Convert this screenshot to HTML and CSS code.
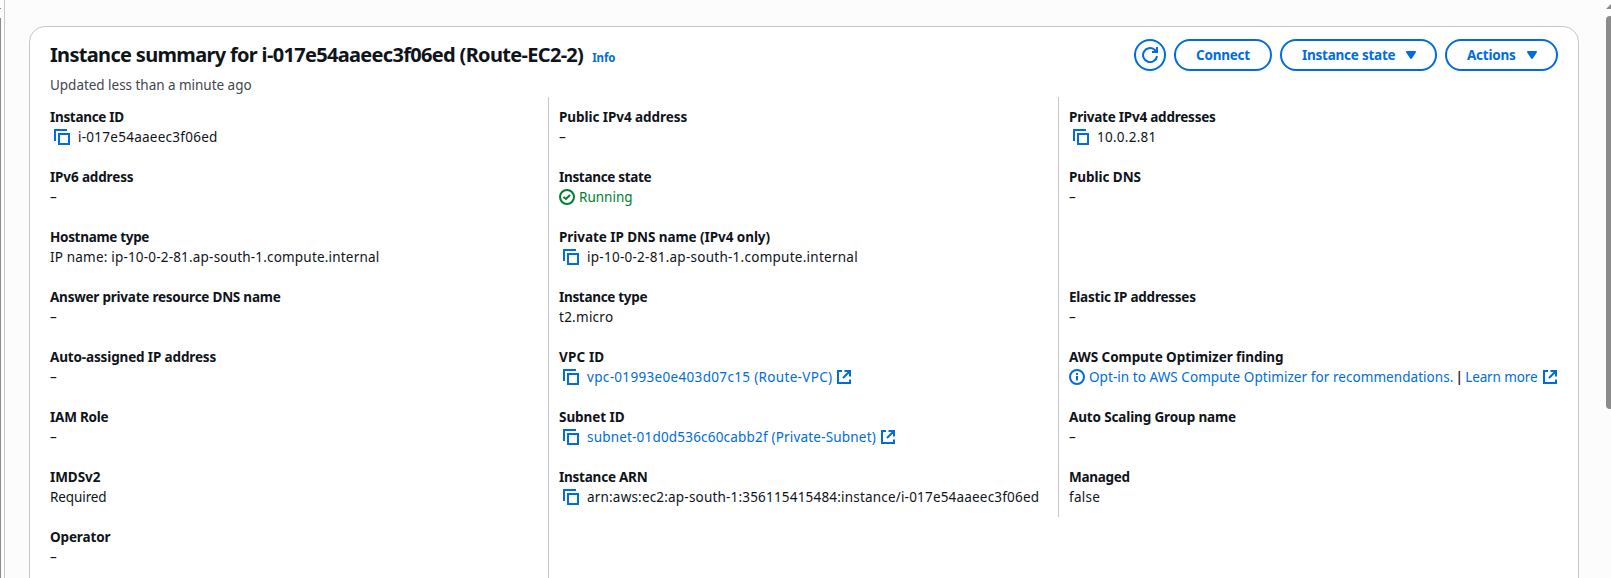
FILE: index.html
```html
<!DOCTYPE html>
<html lang="en">
<head>
<meta charset="utf-8">
<title>Instance summary</title>
<link rel="stylesheet" href="styles.css">
</head>
<body>
<svg class="defs" aria-hidden="true">
  <symbol id="copy" viewBox="0 0 16 16"><path d="M1 12V1h12M5 5h10v10H5z" fill="none" stroke="currentColor" stroke-width="2"/></symbol>
  <symbol id="external" viewBox="0 0 16 16"><path d="M6 2H2v12h12V10.500M8.500 2H14v5.500M14 2 7 9" fill="none" stroke="currentColor" stroke-width="2"/></symbol>
  <symbol id="check" viewBox="0 0 16 16"><circle cx="8" cy="8" r="7" fill="none" stroke="currentColor" stroke-width="2"/><path d="m4.500 8 2.500 2 4-4" fill="none" stroke="currentColor" stroke-width="2"/></symbol>
  <symbol id="info" viewBox="0 0 16 16"><circle cx="8" cy="8" r="7" fill="none" stroke="currentColor" stroke-width="2"/><path d="M8 11.500V7M8 6V4" fill="none" stroke="currentColor" stroke-width="2"/></symbol>
  <symbol id="refresh" viewBox="0 0 16 16"><path d="M15 9a7 7 0 1 1-2.500-6.300L15 5M15 0v5h-5" fill="none" stroke="currentColor" stroke-width="2"/></symbol>
  <symbol id="caret" viewBox="0 0 16 16"><path d="M4 5h8l-4 6z" fill="currentColor" stroke="currentColor" stroke-width="2" stroke-linejoin="round"/></symbol>
</svg>
<div class="page">
  <div class="rail"></div>
  <main class="content">
    <section class="card">
      <header class="header">
        <div class="heading">
          <h1>Instance summary for i-017e54aaeec3f06ed (Route-EC2-2)</h1>
          <a class="info">Info</a>
        </div>
        <div class="actions">
          <button class="btn round"><svg class="icon"><use href="#refresh"/></svg></button>
          <button class="btn connect">Connect</button>
          <button class="btn menu state">Instance state<svg class="icon"><use href="#caret"/></svg></button>
          <button class="btn menu more">Actions<svg class="icon"><use href="#caret"/></svg></button>
        </div>
      </header>
      <p class="updated">Updated less than a minute ago</p>
      <div class="columns">
        <dl class="column">
          <div class="field"><dt class="tight">Instance ID</dt><dd><svg class="icon copy"><use href="#copy"/></svg><span>i-017e54aaeec3f06ed</span></dd></div>
          <div class="field"><dt>IPv6 address</dt><dd>–</dd></div>
          <div class="field"><dt class="tight">Hostname type</dt><dd class="snug">IP name: ip-10-0-2-81.ap-south-1.compute.internal</dd></div>
          <div class="field"><dt class="mid">Answer private resource DNS name</dt><dd>–</dd></div>
          <div class="field"><dt>Auto-assigned IP address</dt><dd>–</dd></div>
          <div class="field"><dt class="mid">IAM Role</dt><dd>–</dd></div>
          <div class="field"><dt class="loose">IMDSv2</dt><dd class="narrow">Required</dd></div>
          <div class="field"><dt>Operator</dt><dd>–</dd></div>
        </dl>
        <dl class="column second">
          <div class="field"><dt class="loose">Public IPv4 address</dt><dd>–</dd></div>
          <div class="field"><dt class="tight">Instance state</dt><dd class="ok"><svg class="icon"><use href="#check"/></svg><span>Running</span></dd></div>
          <div class="field"><dt class="loose">Private IP DNS name (IPv4 only)</dt><dd><svg class="icon copy"><use href="#copy"/></svg><span>ip-10-0-2-81.ap-south-1.compute.internal</span></dd></div>
          <div class="field"><dt class="tight">Instance type</dt><dd>t2.micro</dd></div>
          <div class="field"><dt class="wide">VPC ID</dt><dd><svg class="icon copy"><use href="#copy"/></svg><a class="airy">vpc-01993e0e403d07c15 (Route-VPC)</a><svg class="icon ext"><use href="#external"/></svg></dd></div>
          <div class="field"><dt class="loose">Subnet ID</dt><dd><svg class="icon copy"><use href="#copy"/></svg><a class="snug">subnet-01d0d536c60cabb2f (Private-Subnet)</a><svg class="icon ext"><use href="#external"/></svg></dd></div>
          <div class="field"><dt class="mid">Instance ARN</dt><dd><svg class="icon copy"><use href="#copy"/></svg><span class="snug">arn:aws:ec2:ap-south-1:356115415484:instance/i-017e54aaeec3f06ed</span></dd></div>
        </dl>
        <dl class="column third">
          <div class="field"><dt class="mid">Private IPv4 addresses</dt><dd><svg class="icon copy"><use href="#copy"/></svg><span>10.0.2.81</span></dd></div>
          <div class="field tall"><dt class="loose">Public DNS</dt><dd>–</dd></div>
          <div class="field"><dt class="mid">Elastic IP addresses</dt><dd>–</dd></div>
          <div class="field"><dt class="loose">AWS Compute Optimizer finding</dt><dd class="finding"><svg class="icon"><use href="#info"/></svg><a class="optin">Opt-in to AWS Compute Optimizer for recommendations.</a><span class="bar">|</span><a class="narrow">Learn more</a><svg class="icon ext"><use href="#external"/></svg></dd></div>
          <div class="field"><dt>Auto Scaling Group name</dt><dd>–</dd></div>
          <div class="field"><dt class="tight">Managed</dt><dd>false</dd></div>
        </dl>
      </div>
    </section>
  </main>
  <div class="scroll"><svg class="up" viewBox="0 0 5 5"><path d="M0 5 5 0v5z" fill="#8b8b8b"/></svg><div class="thumb"></div></div>
</div>
</body>
</html>
```
FILE: styles.css
```css
* { box-sizing: border-box; }
body { margin: 0; font: 13.5px/20px "Noto Sans", "Open Sans", sans-serif; color: #0f141a; background: #fcfcfd; }
.defs { display: none; }
.page { display: flex; height: 578px; overflow: hidden; }
.rail { flex: none; width: 5px; background: linear-gradient(#8b8b8b, #8b8b8b) 0 18px / 1px 100% no-repeat, linear-gradient(#8b8b8b, #8b8b8b) 0 8px / 1px 1px no-repeat; border-right: 1px solid #c6c6cd; }
.content { flex: 1; min-width: 0; padding: 26px 27px 0 24px; }
.card { height: 600px; border: 1px solid #c6c6cd; border-radius: 16px; background: #fff; padding: 12px 20px 0; }
.header { display: flex; justify-content: space-between; height: 32px; }
.heading { display: flex; align-items: baseline; gap: 9px; white-space: nowrap; }
h1 { margin: 0; font-size: 20px; line-height: 32px; font-weight: 700; letter-spacing: -0.68px; }
.info { font-size: 11.5px; font-weight: 700; color: #006ce0; letter-spacing: -0.15px; }
.actions { display: flex; gap: 8px; }
.btn { display: flex; align-items: center; justify-content: center; height: 32px; padding: 0; border: 2px solid #006ce0; border-radius: 20px; background: #fff; color: #006ce0; font: 700 13.5px/20px "Noto Sans", sans-serif; letter-spacing: -0.24px; white-space: nowrap; }
.menu { justify-content: space-between; padding: 0 16px 0 20px; }
.round { width: 32px; }
.connect { width: 98px; }
.state { width: 157px; }
.more { width: 113px; }
.icon { flex: none; display: block; width: 16px; height: 16px; }
.updated { margin: 4px 0 0; color: #424650; line-height: 20px; letter-spacing: -0.03px; }
.columns { display: grid; grid-template-columns: 498px 510px minmax(0, 1fr); align-items: start; margin-top: 2px; }
.column { margin: 0; padding-top: 10px; height: 490px; }
.second { border-left: 1px solid #c6c6cd; padding-left: 10px; }
.third { border-left: 1px solid #c6c6cd; padding-left: 10px; height: 420px; }
.field { height: 60px; white-space: nowrap; }
.tall { height: 120px; }
dt { height: 20px; font-weight: 700; letter-spacing: -0.14px; }
.tight { letter-spacing: -0.31px; }
.mid { letter-spacing: -0.23px; }
.loose { letter-spacing: -0.06px; }
.wide { letter-spacing: 0.15px; }
dd { margin: 0; display: flex; align-items: flex-start; height: 20px; letter-spacing: 0.26px; }
dd .icon { margin-top: 2px; }
dd .copy { margin-left: 4px; margin-right: 8px; color: #006ce0; }
.ok { color: #00802f; gap: 4px; letter-spacing: 0; }
a { color: #006ce0; }
dd .ext { margin-left: 4px; color: #006ce0; }
.snug { letter-spacing: 0.19px; }
.airy { letter-spacing: 0.33px; }
.narrow { letter-spacing: -0.1px; }
.finding .icon { color: #006ce0; }
.optin { margin-left: 4px; letter-spacing: 0.06px; }
.bar { margin: 0 2px; font-weight: 600; }
.scroll { flex: none; width: 5px; padding-top: 4px; }
.up { display: block; width: 5px; height: 5px; }
.thumb { margin-top: 7px; height: 393px; background: #8b8b8b; border-radius: 4px 0 0 4px; }
```
